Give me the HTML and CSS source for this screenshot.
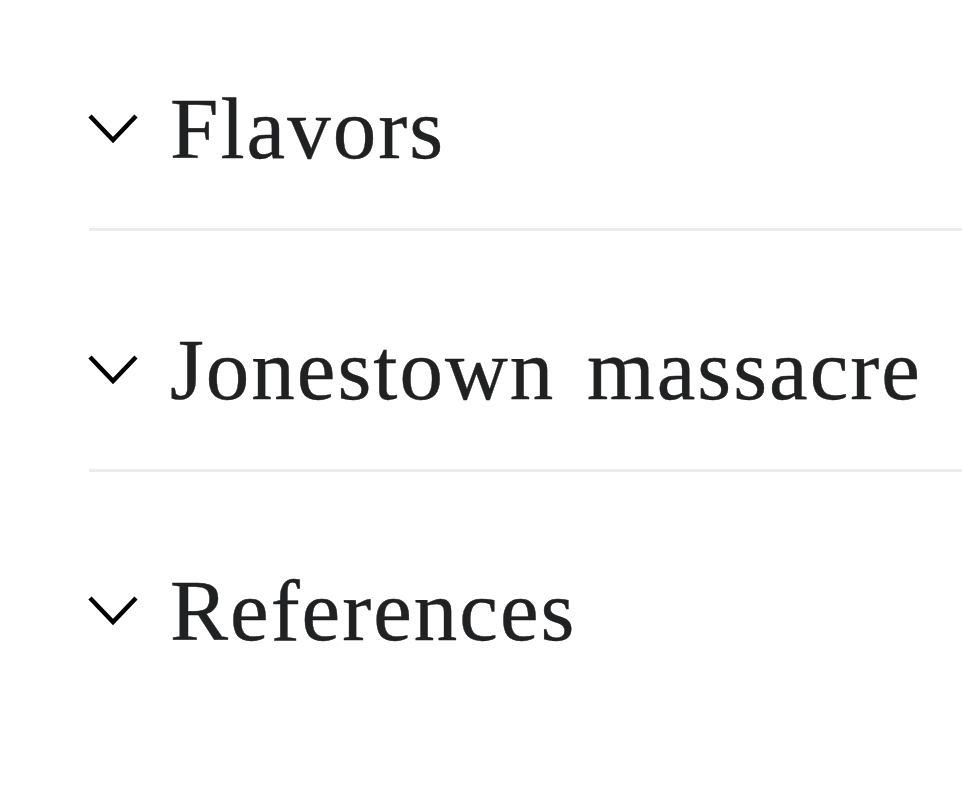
FILE: index.html
```html
<!DOCTYPE html>
<html lang="en">

<head>
    <meta charset="UTF-8">
    <meta name="viewport" content="width=device-width, initial-scale=1.0">
    <title>Sections</title>
    <link rel="stylesheet" href="styles.css">
</head>

<body>
    <div class="sections">
        <div class="section">
            <h2 class="section-heading">
                <svg class="chevron" width="52" height="32" viewBox="0 0 52 32"><polyline points="3,3 26,27 49,3" /></svg>
                <span>Flavors</span>
            </h2>
        </div>
        <div class="section">
            <h2 class="section-heading">
                <svg class="chevron" width="52" height="32" viewBox="0 0 52 32"><polyline points="3,3 26,27 49,3" /></svg>
                <span>Jonestown massacre</span>
            </h2>
        </div>
        <div class="section last">
            <h2 class="section-heading">
                <svg class="chevron" width="52" height="32" viewBox="0 0 52 32"><polyline points="3,3 26,27 49,3" /></svg>
                <span>References</span>
            </h2>
        </div>
    </div>
</body>

</html>
```

FILE: styles.css
```css
html, body {
    margin: 0;
    padding: 0;
    background: #ffffff;
}

body {
    font-family: "Liberation Serif", "DejaVu Serif", serif;
    color: #202122;
}

.sections {
    padding-left: 89px;
}

.section {
    border-bottom: 3px solid #eaecf0;
}

.section + .section {
    margin-top: 10px;
}

.section.last {
    border-bottom: none;
}

.section-heading {
    display: flex;
    align-items: center;
    gap: 31px;
    margin: 0;
    padding: 85px 0 56px;
    font-size: 87px;
    font-weight: normal;
    line-height: 1;
    letter-spacing: 2px;
    word-spacing: 8px;
    -webkit-text-stroke: 0.4px #202122;
}

.chevron {
    flex-shrink: 0;
    margin-left: -2px;
}

.chevron polyline {
    fill: none;
    stroke: #000000;
    stroke-width: 4.5;
}
```
